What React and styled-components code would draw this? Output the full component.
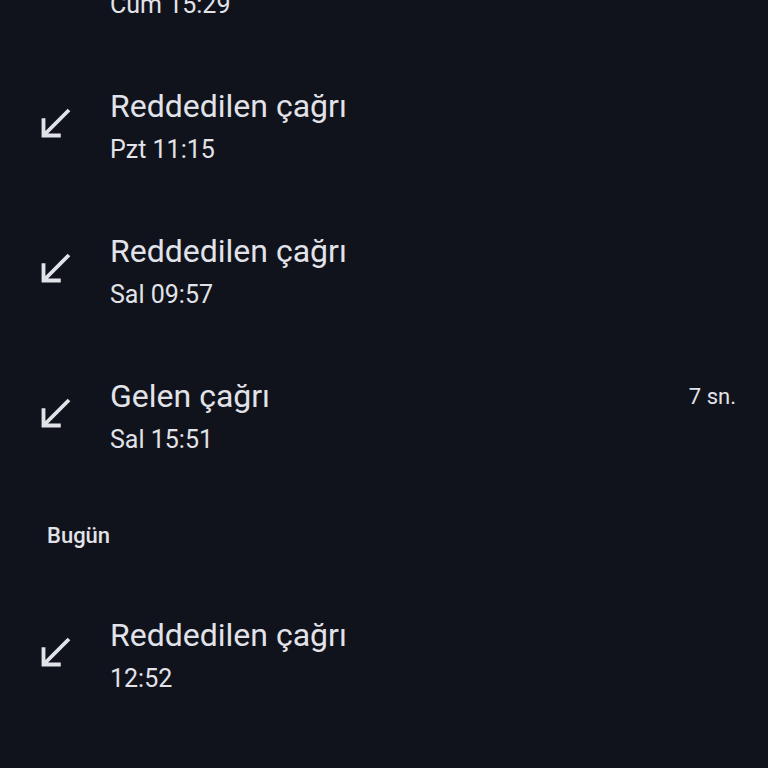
import React from 'react';
import styled, { createGlobalStyle } from 'styled-components';

const calls = [
  { title: 'Gelen çağrı', time: 'Cum 15:29' },
  { title: 'Reddedilen çağrı', time: 'Pzt 11:15' },
  { title: 'Reddedilen çağrı', time: 'Sal 09:57' },
  { title: 'Gelen çağrı', time: 'Sal 15:51', duration: '7 sn.' },
];

const today = [
  { title: 'Reddedilen çağrı', time: '12:52' },
  { title: 'Gelen çağrı', time: '13:40' },
];

function ReceivedIcon() {
  return (
    <svg width="46" height="46" viewBox="0 0 24 24">
      <path d="M20 5.41L18.59 4 7 15.59V9H5v10h10v-2H8.41z" fill="#e2e2e9" />
    </svg>
  );
}

function CallRow({ call }) {
  return (
    <Row>
      <IconBox>
        <ReceivedIcon />
      </IconBox>
      <TextCol>
        <Title>{call.title}</Title>
        <Time>{call.time}</Time>
      </TextCol>
      {call.duration && <Duration>{call.duration}</Duration>}
    </Row>
  );
}

function App() {
  return (
    <Screen>
      <GlobalStyle />
      <List>
        {calls.map((c, i) => (
          <CallRow key={i} call={c} />
        ))}
        <SectionHeader>Bugün</SectionHeader>
        {today.map((c, i) => (
          <CallRow key={'t' + i} call={c} />
        ))}
      </List>
    </Screen>
  );
}

export default App;

const GlobalStyle = createGlobalStyle`
  html, body {
    margin: 0;
    padding: 0;
    background: #10131b;
  }
`;

const Screen = styled.div`
  width: 768px;
  height: 768px;
  overflow: hidden;
  background: #10131b;
  font-family: Roboto, "Noto Sans", sans-serif;
  color: #e2e2e9;
`;

const List = styled.div`
  display: flex;
  flex-direction: column;
  margin-top: -90px;
`;

const Row = styled.div`
  height: 145px;
  display: grid;
  grid-template-columns: 46px 1fr auto;
  column-gap: 32px;
  align-items: center;
  padding: 0 32px;
`;

const IconBox = styled.div`
  width: 46px;
  height: 46px;
  display: flex;
  margin-top: -8px;
`;

const TextCol = styled.div`
  display: flex;
  flex-direction: column;
  gap: 11px;
  padding-bottom: 3px;
`;

const Title = styled.div`
  font-size: 32px;
  line-height: 36px;
  letter-spacing: 0;
`;

const Time = styled.div`
  font-size: 25px;
  line-height: 30px;
`;

const Duration = styled.div`
  align-self: center;
  margin-top: -42px;
  font-size: 22px;
  line-height: 28px;
`;

const SectionHeader = styled.div`
  height: 94px;
  display: flex;
  align-items: center;
  padding-left: 47px;
  padding-bottom: 4px;
  box-sizing: border-box;
  font-size: 22px;
  font-weight: 500;
`;
